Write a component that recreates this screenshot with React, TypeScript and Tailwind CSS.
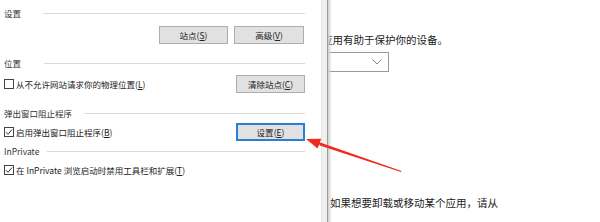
import React from "react";

function U({ c }: { c: string }) {
  return (
    <>
      (<span className="underline underline-offset-[1px]">{c}</span>)
    </>
  );
}

function Header({ label, gap }: { label: React.ReactNode; gap: string }) {
  return (
    <div className="flex h-[14px] items-center">
      <span className="text-[8.5px] leading-[14px] text-[#333]">{label}</span>
      <div className={`h-px flex-1 bg-[#dadada] ${gap}`} />
    </div>
  );
}

function Btn({ children, w, focus }: { children: React.ReactNode; w: string; focus?: boolean }) {
  return (
    <div
      className={`flex h-[18px] items-center justify-center bg-[#e1e1e1] text-[8.5px] leading-none text-[#222] ${w} ${
        focus ? "border-2 border-[#2a7fd4]" : "border border-[#adadad]"
      }`}
    >
      {children}
    </div>
  );
}

function Check({ checked }: { checked?: boolean }) {
  return (
    <div className="flex h-[10px] w-[10px] items-center justify-center border border-[#444] bg-white">
      {checked && (
        <svg width="8" height="8" viewBox="0 0 8 8">
          <path d="M1 4.2 L3 6.3 L7 1.5" fill="none" stroke="#333" strokeWidth="1" />
        </svg>
      )}
    </div>
  );
}

export default function App() {
  return (
    <div className="relative h-[222px] w-[600px] overflow-hidden bg-white font-['Noto_Sans_CJK_SC',sans-serif] text-[#1a1a1a]">
      {/* background page */}
      <div className="flex flex-col pl-[319px] pt-[33px]">
        <div className="ml-[3px] h-[14px] text-[10.5px] leading-[14px] text-[#222]">应用有助于保护你的设备。</div>
        <div className="mt-[5px] flex h-[20px] w-[70px] items-center justify-end border border-[#9a9a9a] pr-[6px]">
          <svg width="10" height="6" viewBox="0 0 10 6">
            <path d="M0.5 0.5 L5 5 L9.5 0.5" fill="none" stroke="#777" strokeWidth="0.9" />
          </svg>
        </div>
        <div className="ml-[11px] mt-[124px] h-[14px] text-[10.5px] leading-[14px] text-[#222]">
          如果想要卸载或移动某个应用，请从
        </div>
      </div>

      {/* dialog window */}
      <div className="absolute left-0 top-0 flex h-full">
        <div className="flex w-[321px] flex-col bg-white pl-[4px] pr-[16px] pt-[6px]">
          <Header label="设置" gap="ml-[22px]" />
          <div className="mt-[6px] flex justify-end gap-[6px] pr-[1px]">
            <Btn w="w-[69px]">
              站点<U c="S" />
            </Btn>
            <Btn w="w-[70px]">
              高级<U c="V" />
            </Btn>
          </div>
          <div className="mt-[12px]">
            <Header label="位置" gap="ml-[23px]" />
          </div>
          <div className="mt-[5px] flex h-[18px] items-center justify-between">
            <div className="flex items-center gap-[2px]">
              <Check />
              <span className="text-[8.5px] leading-none">
                从不允许网站请求你的物理位置<U c="L" />
              </span>
            </div>
            <Btn w="w-[69px]">
              清除站点<U c="C" />
            </Btn>
          </div>
          <div className="mt-[13px]">
            <Header label="弹出窗口阻止程序" gap="ml-[12px]" />
          </div>
          <div className="mt-[3px] flex h-[18px] items-center justify-between">
            <div className="flex items-center gap-[2px]">
              <Check checked />
              <span className="text-[8.5px] leading-none">
                启用弹出窗口阻止程序<U c="B" />
              </span>
            </div>
            <Btn w="w-[69px]" focus>
              设置<U c="E" />
            </Btn>
          </div>
          <div className="mt-[3px]">
            <Header label="InPrivate" gap="ml-[8px]" />
          </div>
          <div className="mt-[5px] flex h-[14px] items-center gap-[2px]">
            <Check checked />
            <span className="text-[8.5px] leading-none">
              在 InPrivate 浏览启动时禁用工具栏和扩展<U c="T" />
            </span>
          </div>
        </div>
        <div className="w-[6px] border-l border-[#e3e3e3] bg-[#f0f0f0]" />
        <div className="w-px bg-[#9a9a9a]" />
        <div className="w-[4px] bg-gradient-to-r from-[#cfcfcf] to-transparent" />
      </div>

      {/* red annotation arrow */}
      <svg className="pointer-events-none absolute left-0 top-0" width="600" height="222" viewBox="0 0 600 222">
        <polygon points="318,141.8 319.8,145.6 401,172 401.4,171" fill="#ee2a1f" />
        <polygon points="306,139 321.2,138.7 317.6,148.6" fill="#ee2a1f" />
      </svg>
    </div>
  );
}
